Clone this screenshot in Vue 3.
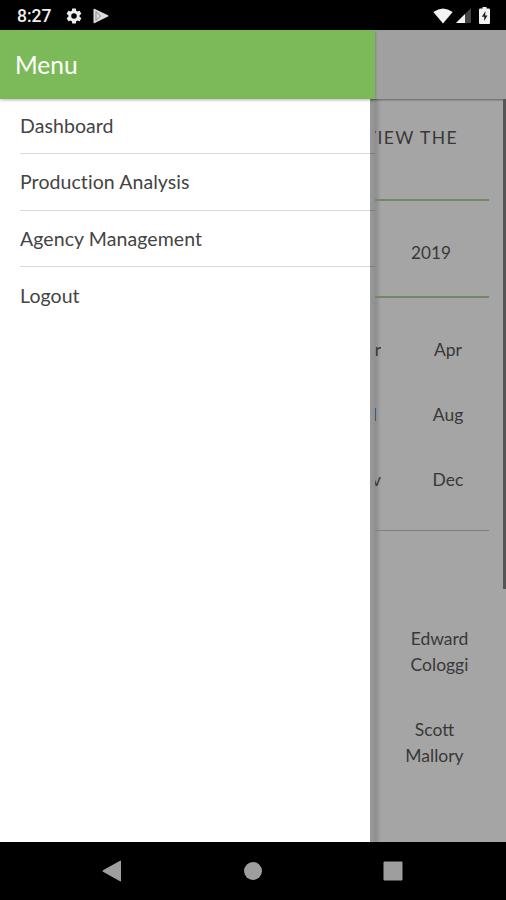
<script setup>
const menu = ['Dashboard', 'Production Analysis', 'Agency Management', 'Logout']
const months = [
  { edge: 'r', name: 'Apr' },
  { edge: 'l', name: 'Aug' },
  { edge: 'v', name: 'Dec' },
]
</script>

<template>
  <div class="screen">
    <header class="status">
      <span class="time">8:27</span>
      <svg class="gear" width="18" height="18" viewBox="0 0 24 24"><path fill="#eee" fill-rule="evenodd" d="M19.4 13a7.500 7.500 0 0 0 0-2l2.100-1.650a.5.5 0 0 0 .12-.64l-2-3.460a.5.5 0 0 0-.61-.22l-2.490 1a7.300 7.300 0 0 0-1.690-.98l-.38-2.650A.5.5 0 0 0 14 2h-4a.5.5 0 0 0-.49.42l-.38 2.650c-.61.25-1.170.59-1.690.98l-2.490-1a.5.5 0 0 0-.61.22l-2 3.460a.5.5 0 0 0 .12.64L4.600 11a7.500 7.500 0 0 0 0 2l-2.110 1.650a.5.5 0 0 0-.12.64l2 3.460c.12.22.39.3.61.22l2.490-1c.52.4 1.080.73 1.690.98l.38 2.650c.03.24.24.42.49.42h4c.25 0 .46-.18.49-.42l.38-2.650c.61-.25 1.170-.59 1.690-.98l2.490 1c.23.09.49 0 .61-.22l2-3.460a.5.5 0 0 0-.12-.64zM12 15.700a3.700 3.700 0 1 1 0-7.400 3.700 3.700 0 0 1 0 7.400z" /></svg>
      <svg class="play" width="16" height="16" viewBox="0 0 16 16"><path fill="#ddd" d="M.5 1.500Q.5.300 1.800.900L15 7.200q1 .700 0 1.400L1.800 15Q.5 15.500.5 14.500z" /><path d="M3 3.500 7.500 8 3 12.500M3 3.500V12.500" fill="none" stroke="#888" stroke-width="1" /></svg>
      <span class="spacer"></span>
      <svg width="20" height="16" viewBox="0 0 20 16"><path fill="#f2f2f2" d="M.3 4Q10-3 19.700 4L10 15.500z" /></svg>
      <svg class="signal" width="15" height="15" viewBox="0 0 15 15"><path fill="#444" d="M15 0v15H0z" /><path fill="#f2f2f2" d="M9 6v9H0z" /></svg>
      <svg class="battery" width="11" height="17" viewBox="0 0 11 17"><path fill="#f2f2f2" d="M3.500 0h4v1.600h2.200q1.300 0 1.300 1.200V16q0 1-1 1H1q-1 0-1-1V2.800q0-1.200 1.300-1.200h2.200z" /><path fill="#222" d="M6.500 4 2.800 9.700h2.400V14l3.300-5.500H6.200z" /></svg>
    </header>

    <main class="body">
      <nav class="drawer">
        <div class="title">Menu</div>
        <ul class="items">
          <li v-for="item in menu" :key="item"><span>{{ item }}</span></li>
        </ul>
      </nav>
      <section class="page">
        <div class="toolbar"></div>
        <div class="content">
          <div class="heading"><span>VIEW THE</span></div>
          <div class="year">2019</div>
          <div class="months">
            <div v-for="m in months" :key="m.name" class="month">
              <span class="edge"><i>{{ m.edge }}</i></span><span class="name">{{ m.name }}</span>
            </div>
          </div>
          <div class="person first">Edward<br />Cologgi</div>
          <div class="person second">Scott<br />Mallory</div>
        </div>
        <div class="scrollbar"></div>
      </section>
    </main>

    <footer class="navbar">
      <svg width="20" height="22" viewBox="0 0 20 22"><path fill="#9e9e9e" d="M18 .7q1-.5 1 .6v19.400q0 1.100-1 .6L1 11.700q-1-.7 0-1.400z" /></svg>
      <svg width="18" height="18" viewBox="0 0 18 18"><circle cx="9" cy="9" r="9" fill="#9e9e9e" /></svg>
      <svg width="20" height="20" viewBox="0 0 20 20"><rect x=".5" y=".5" width="19" height="19" rx="1" fill="#9e9e9e" /></svg>
    </footer>
  </div>
</template>

<style>
body {
  margin: 0;
}
</style>

<style scoped>
.screen {
  width: 506px;
  height: 900px;
  display: flex;
  flex-direction: column;
  overflow: hidden;
  background: #000;
  font-family: Lato, sans-serif;
}
.status {
  box-sizing: border-box;
  height: 30px;
  display: flex;
  align-items: center;
  padding: 1px 16px 0 17px;
}
.time {
  width: 48px;
  color: #eee;
  font: 500 17.500px/30px Roboto, sans-serif;
}
.play {
  margin-left: 10px;
}
.spacer {
  flex: 1;
}
.signal {
  margin-left: 3px;
}
.battery {
  margin-left: 8px;
}
.body {
  height: 812px;
  display: flex;
}
.drawer {
  position: relative;
  z-index: 1;
  width: 370px;
  background: #fff;
}
.title {
  box-sizing: border-box;
  width: 375px;
  height: 69px;
  padding-left: 15px;
  background: #7cba59;
  color: #fff;
  font-size: 24.500px;
  line-height: 69px;
  box-shadow: 0 1px 3px rgba(0, 0, 0, 0.3);
}
.items {
  width: 375px;
  margin: 0;
  padding: 0;
  list-style: none;
}
.items li {
  box-sizing: border-box;
  height: 56.500px;
  margin-left: 20px;
  border-bottom: 1px solid rgba(0, 0, 0, 0.15);
  color: #444;
  font-size: 19.500px;
  letter-spacing: 0.080px;
  line-height: 56px;
}
.items li:first-child {
  height: 55px;
  line-height: 54px;
}
.items li:last-child {
  border-bottom: 0;
  line-height: 58px;
}
.page {
  display: grid;
  grid-template: 69px 743px / 133px 3px;
  overflow: hidden;
  background: linear-gradient(90deg, #999 0, #8f8f8f 6px, #a5a5a5 11px);
}
.toolbar {
  grid-column: 1 / 3;
  background: #a0a0a0;
  box-shadow: 0 1px 2px rgba(0, 0, 0, 0.4);
}
.content {
  margin-left: 5px;
  color: #383838;
  font-size: 17.500px;
}
.heading,
.year {
  box-sizing: border-box;
  width: 114px;
  border-bottom: 2px solid #718765;
}
.heading {
  height: 102px;
  padding-top: 26px;
  line-height: 25px;
  letter-spacing: 1.400px;
  overflow: hidden;
}
.heading span {
  display: flex;
  justify-content: flex-end;
  width: 83px;
  white-space: nowrap;
}
.year {
  height: 97px;
  padding-left: 36px;
  font-size: 17.200px;
  line-height: 103px;
}
.months {
  box-sizing: border-box;
  width: 114px;
  height: 233px;
  padding-top: 19px;
  border-bottom: 1px solid #7d8178;
}
.month {
  display: flex;
  height: 65px;
  line-height: 65px;
}
.edge {
  display: flex;
  flex: none;
  justify-content: flex-end;
  width: 6px;
  overflow: hidden;
}
.month:nth-child(2) .edge {
  width: 2px;
  margin-right: 4px;
}
.edge i {
  font-style: normal;
}
.name {
  flex: none;
  width: 134px;
  text-align: center;
}
.person {
  text-align: center;
  line-height: 26px;
}
.first {
  width: 129px;
  padding-top: 95px;
}
.second {
  width: 119px;
  padding-top: 39px;
}
.scrollbar {
  height: 490px;
  background: #555;
}
.navbar {
  flex: 1;
  display: flex;
  align-items: center;
  justify-content: space-between;
  padding: 0 103px 0 102px;
}
</style>
